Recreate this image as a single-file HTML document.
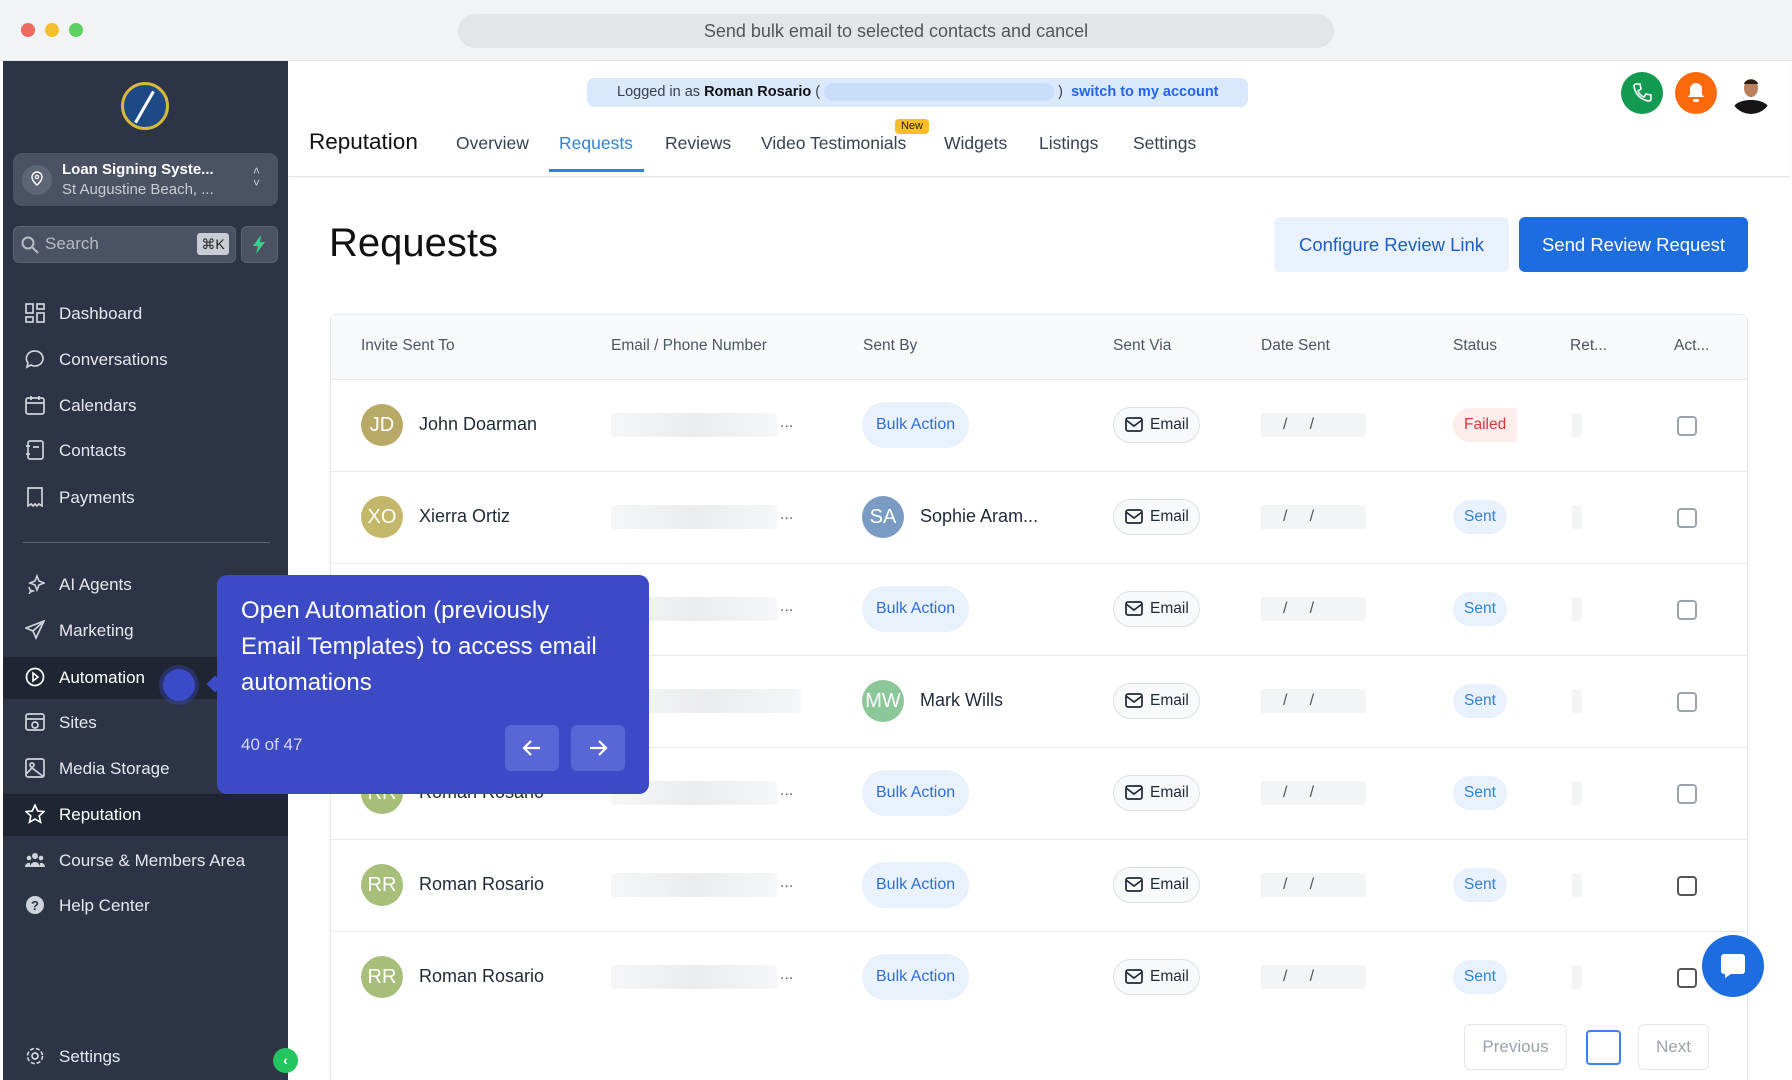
<!DOCTYPE html>
<html><head><meta charset="utf-8"><style>
*{box-sizing:border-box;margin:0;padding:0}
body{width:1792px;height:1080px;overflow:hidden;background:#fff;font-family:"Liberation Sans",sans-serif;position:relative;color:#1f2937}
.a{position:absolute}
.tb{left:0;top:0;width:1792px;height:61px;background:#f2f3f5;border-bottom:1px solid #e3e4e7}
.dot{width:14px;height:14px;border-radius:50%;top:23px}
.url{left:458px;top:14px;width:876px;height:34px;border-radius:17px;background:#e4e5e8;text-align:center;line-height:34px;font-size:18px;color:#555}
.sb{left:3px;top:61px;width:285px;height:1019px;background:#2d3446}
.nav{left:0;width:285px;height:42px;color:#e6e8ee;font-size:17px;line-height:42px;padding-left:56px}
.nav svg{position:absolute;left:22px;top:10px}
.tab{top:133px;font-size:17.5px;color:#374151}
.hd{top:337px;font-size:15.5px;color:#4b5563}
.row{left:330px;width:1418px;height:92px;border-top:1px solid #e8eaee}
.av{width:42px;height:42px;border-radius:50%;color:#fff;font-size:20px;text-align:center;line-height:42px}
.nm{font-size:18px;color:#1f2937}
.blur{width:166px;height:24px;background:linear-gradient(90deg,#f5f6f7,#ebecee 50%,#f5f6f7);border-radius:3px}
.pill{height:46px;border-radius:23px;background:#e9f1fd;color:#2f6fd6;font-size:16px;line-height:46px;padding:0 14px}
.em{height:36px;border-radius:18px;border:1px solid #dcdfe4;background:#f8f9fb;font-size:15.5px;line-height:34px;padding:0 10px 0 36px;color:#1f2937}
.em svg{position:absolute;left:11px;top:9px}
.dt{width:105px;height:24px;background:#f3f4f6;font-size:16px;color:#555;line-height:24px;padding-left:22px}
.st{height:34px;border-radius:17px;font-size:15.5px;line-height:34px;padding:0 11px}
.cb{width:20px;height:20px;border:2px solid #9ca3af;border-radius:4px}
.rt{width:10px;height:24px;background:#f3f4f6}
</style></head><body>
<div class="a tb"></div>
<div class="a dot" style="left:21px;background:#ee6a5f"></div>
<div class="a dot" style="left:45px;background:#f5c02f"></div>
<div class="a dot" style="left:69px;background:#5ed163"></div>
<div class="a url">Send bulk email to selected contacts and cancel</div>

<div class="a sb">
 <div class="a" style="left:118px;top:21px;width:48px;height:48px;border-radius:50%;background:#1d4a85;border:3px solid #d7b93a"></div>
 <div class="a" style="left:140px;top:28px;width:3px;height:36px;background:#fff;transform:rotate(30deg)"></div>
 <div class="a" style="left:10px;top:92px;width:265px;height:53px;border-radius:9px;background:#4a5263"></div>
 <div class="a" style="left:19px;top:104px;width:30px;height:30px;border-radius:50%;background:#5d6576"></div>
 <svg class="a" style="left:26px;top:110px" width="16" height="18"><path d="M8 1a5 5 0 0 1 5 5c0 4-5 8-5 8S3 10 3 6a5 5 0 0 1 5-5z" fill="none" stroke="#fff" stroke-width="1.4"/><circle cx="8" cy="6" r="1.6" fill="none" stroke="#fff" stroke-width="1.3"/></svg>
 <div class="a" style="left:59px;top:100px;font-size:15px;color:#fff;font-weight:bold">Loan Signing Syste...</div>
 <div class="a" style="left:59px;top:120px;font-size:15px;color:#c8ccd4">St Augustine Beach, ...</div>
 <div class="a" style="left:250px;top:104px;color:#c8ccd4;font-size:12px;line-height:12px">˄<br>˅</div>
 <div class="a" style="left:10px;top:165px;width:223px;height:37px;border-radius:6px;background:#4a5263;border:1px solid #5a6272"></div>
 <div class="a" style="left:42px;top:173px;font-size:17px;color:#b7bcc6">Search</div>
 <div class="a" style="left:194px;top:172px;width:32px;height:22px;background:#c8ccd4;border-radius:3px;font-size:14px;color:#222;text-align:center;line-height:22px">⌘K</div>
 <svg class="a" style="left:18px;top:175px" width="19" height="19"><circle cx="7" cy="7" r="5.5" fill="none" stroke="#b7bcc6" stroke-width="2"/><path d="M11 11l6 6" stroke="#b7bcc6" stroke-width="2"/></svg>
 <div class="a" style="left:238px;top:165px;width:37px;height:37px;border-radius:6px;background:#4a5263;border:1px solid #5a6272"></div>
 <svg class="a" style="left:248px;top:174px" width="16" height="19"><path d="M10 0L2 11h5l-2 8 9-12H9z" fill="#3ecf8e"/></svg>

 <div class="a nav" style="top:232px"><svg width="20" height="20"><g fill="none" stroke="#cfd3da" stroke-width="1.7"><rect x="1" y="1" width="7" height="9"/><rect x="12" y="1" width="7" height="5"/><rect x="1" y="14" width="7" height="5"/><rect x="12" y="10" width="7" height="9"/></g></svg>Dashboard</div>
 <div class="a nav" style="top:278px"><svg width="20" height="20"><path d="M10 2a8 7.5 0 1 1-4 14l-4 2 1-4A8 7.5 0 0 1 10 2z" fill="none" stroke="#cfd3da" stroke-width="1.7"/></svg>Conversations</div>
 <div class="a nav" style="top:324px"><svg width="20" height="20"><g fill="none" stroke="#cfd3da" stroke-width="1.7"><rect x="1" y="3" width="18" height="16" rx="2"/><path d="M1 8h18M6 1v4M14 1v4"/></g></svg>Calendars</div>
 <div class="a nav" style="top:369px"><svg width="20" height="20"><g fill="none" stroke="#cfd3da" stroke-width="1.7"><rect x="3" y="1" width="15" height="18" rx="2"/><path d="M1 6h4M1 14h4M8 7h6"/></g></svg>Contacts</div>
 <div class="a nav" style="top:416px"><svg width="20" height="20"><g fill="none" stroke="#cfd3da" stroke-width="1.7"><path d="M3 1h14v18l-3-2-2 2-2-2-2 2-2-2-3 2z"/></g></svg>Payments</div>
 <div class="a" style="left:20px;top:481px;width:247px;height:1px;background:#5d6576"></div>
 <div class="a nav" style="top:503px"><svg width="20" height="20"><path d="M12 2l2 5 5 2-5 2-2 5-2-5-5-2 5-2zM4 13l1 3 3 1-3 1-1 3" fill="none" stroke="#cfd3da" stroke-width="1.6"/></svg>AI Agents</div>
 <div class="a nav" style="top:549px"><svg width="20" height="20"><path d="M19 1L1 8l7 3 3 7zM8 11l11-10" fill="none" stroke="#cfd3da" stroke-width="1.7"/></svg>Marketing</div>
 <div class="a nav" style="top:596px;background:#1f2533;color:#fff"><svg width="20" height="20"><circle cx="10" cy="10" r="8.5" fill="none" stroke="#fff" stroke-width="1.7"/><path d="M8 6l5 4-5 4z" fill="none" stroke="#fff" stroke-width="1.6"/></svg>Automation</div>
 <div class="a nav" style="top:641px"><svg width="20" height="20"><g fill="none" stroke="#cfd3da" stroke-width="1.7"><rect x="1" y="2" width="18" height="16" rx="2"/><path d="M1 7h18"/><circle cx="10" cy="13" r="3"/></g></svg>Sites</div>
 <div class="a nav" style="top:687px"><svg width="20" height="20"><g fill="none" stroke="#cfd3da" stroke-width="1.7"><rect x="1" y="1" width="18" height="18" rx="2"/><circle cx="7" cy="7" r="2"/><path d="M1 16l6-6 12 9"/></g></svg>Media Storage</div>
 <div class="a nav" style="top:733px;background:#1f2533;color:#fff"><svg width="20" height="20"><path d="M10 1l2.7 6 6.3.6-4.8 4.3 1.4 6.4L10 15l-5.6 3.3 1.4-6.4L1 7.6 7.3 7z" fill="none" stroke="#fff" stroke-width="1.6"/></svg>Reputation</div>
 <div class="a nav" style="top:779px"><svg width="20" height="20"><g fill="#cfd3da"><circle cx="10" cy="6" r="3"/><circle cx="4" cy="8" r="2.3"/><circle cx="16" cy="8" r="2.3"/><path d="M5 17a5 5 0 0 1 10 0zM0 17a4 4 0 0 1 5-4v4zM20 17a4 4 0 0 0-5-4v4z"/></g></svg>Course &amp; Members Area</div>
 <div class="a nav" style="top:824px"><svg width="20" height="20"><circle cx="10" cy="10" r="9" fill="#cfd3da"/><text x="10" y="15" font-size="13" text-anchor="middle" fill="#2d3446" font-family="Liberation Sans" font-weight="bold">?</text></svg>Help Center</div>
 <div class="a nav" style="top:975px"><svg width="20" height="20"><g fill="none" stroke="#cfd3da" stroke-width="1.7"><circle cx="10" cy="10" r="3"/><circle cx="10" cy="10" r="7.5" stroke-dasharray="4 2"/></g></svg>Settings</div>
</div>
<div class="a" style="left:273px;top:1048px;width:25px;height:25px;border-radius:50%;background:#22c55e;color:#fff;font-size:14px;text-align:center;line-height:24px;font-weight:bold">‹</div>

<div class="a" style="left:288px;top:61px;width:1502px;height:116px;border-bottom:1px solid #e5e7eb;box-shadow:0 2px 3px rgba(0,0,0,.04)"></div>
<div class="a" style="left:587px;top:78px;width:661px;height:29px;border-radius:7px;background:#d9e8fd;font-size:14.5px;line-height:29px;color:#374151;padding-left:30px">Logged in as <b style="color:#111">Roman Rosario</b> ( <span style="display:inline-block;width:230px;height:18px;vertical-align:middle;background:#c9dcf8;border-radius:9px"></span> )&nbsp; <b style="color:#2563eb">switch to my account</b></div>
<div class="a" style="left:1621px;top:72px;width:42px;height:42px;border-radius:50%;background:#139a51"></div>
<svg class="a" style="left:1631px;top:82px" width="22" height="22"><path d="M5 2l4 0 1 5-3 2a11 11 0 0 0 6 6l2-3 5 1v4a2 2 0 0 1-2 2A17 17 0 0 1 3 4a2 2 0 0 1 2-2z" fill="none" stroke="#fff" stroke-width="1.6"/></svg>
<div class="a" style="left:1675px;top:72px;width:42px;height:42px;border-radius:50%;background:#fb6a0a"></div>
<svg class="a" style="left:1685px;top:81px" width="22" height="24"><path d="M11 2a6 6 0 0 1 6 6v5l2 3H3l2-3V8a6 6 0 0 1 6-6z" fill="#fff"/><rect x="8" y="18" width="6" height="3" rx="1.5" fill="#fff"/></svg>
<svg class="a" style="left:1729px;top:71px" width="44" height="44"><defs><clipPath id="c"><circle cx="22" cy="22" r="21"/></clipPath></defs><g clip-path="url(#c)"><rect width="44" height="44" fill="#fff"/><path d="M2 44c0-10 8-15 20-15s20 5 20 15z" fill="#151515"/><ellipse cx="22" cy="17" rx="7" ry="9" fill="#b9805c"/><path d="M15 13c1-6 13-6 14 0" fill="#2a1d15"/></g></svg>

<div class="a" style="left:309px;top:129px;font-size:22.5px;color:#111">Reputation</div>
<div class="a tab" style="left:456px">Overview</div>
<div class="a tab" style="left:559px;color:#2f84d4">Requests</div>
<div class="a" style="left:549px;top:169px;width:95px;height:3px;background:#2f84d4"></div>
<div class="a tab" style="left:665px">Reviews</div>
<div class="a tab" style="left:761px">Video Testimonials</div>
<div class="a" style="left:895px;top:119px;width:34px;height:15px;border-radius:4px;background:#fbbf24;font-size:11px;text-align:center;line-height:15px;color:#222">New</div>
<div class="a tab" style="left:944px">Widgets</div>
<div class="a tab" style="left:1039px">Listings</div>
<div class="a tab" style="left:1133px">Settings</div>

<div class="a" style="left:329px;top:221px;font-size:40px;color:#111">Requests</div>
<div class="a" style="left:1274px;top:217px;width:235px;height:55px;border-radius:6px;background:#e9f1fd;color:#1d5fc9;font-size:18.5px;text-align:center;line-height:55px">Configure Review Link</div>
<div class="a" style="left:1519px;top:217px;width:229px;height:55px;border-radius:6px;background:#1d6ce0;color:#fff;font-size:18.5px;text-align:center;line-height:55px">Send Review Request</div>

<div class="a" style="left:330px;top:314px;width:1418px;height:766px;border:1px solid #e5e7eb;border-bottom:none;border-radius:6px 6px 0 0;box-shadow:0 1px 4px rgba(0,0,0,.05)"></div>
<div class="a" style="left:331px;top:315px;width:1416px;height:64px;background:#f8f9fb"></div>
<div class="a hd" style="left:361px">Invite Sent To</div>
<div class="a hd" style="left:611px">Email / Phone Number</div>
<div class="a hd" style="left:863px">Sent By</div>
<div class="a hd" style="left:1113px">Sent Via</div>
<div class="a hd" style="left:1261px">Date Sent</div>
<div class="a hd" style="left:1453px">Status</div>
<div class="a hd" style="left:1570px">Ret...</div>
<div class="a hd" style="left:1674px">Act...</div>

<div class="a row" style="top:379px"></div><div class="a row" style="top:471px"></div><div class="a row" style="top:563px"></div><div class="a row" style="top:655px"></div><div class="a row" style="top:747px"></div><div class="a row" style="top:839px"></div><div class="a row" style="top:931px"></div>

<div class="a av" style="left:361px;top:404px;background:#b9a966">JD</div><div class="a nm" style="left:419px;top:414px">John Doarman</div>
<div class="a av" style="left:361px;top:496px;background:#c4b76a">XO</div><div class="a nm" style="left:419px;top:506px">Xierra Ortiz</div>
<div class="a av" style="left:361px;top:772px;background:#a7bf7b">RR</div><div class="a nm" style="left:419px;top:782px">Roman Rosario</div>
<div class="a av" style="left:361px;top:864px;background:#a7bf7b">RR</div><div class="a nm" style="left:419px;top:874px">Roman Rosario</div>
<div class="a av" style="left:361px;top:956px;background:#a7bf7b">RR</div><div class="a nm" style="left:419px;top:966px">Roman Rosario</div>

<div class="a blur" style="left:611px;top:413px"></div><div class="a" style="left:780px;top:414px;color:#666">...</div>
<div class="a blur" style="left:611px;top:505px"></div><div class="a" style="left:780px;top:506px;color:#666">...</div>
<div class="a blur" style="left:611px;top:597px"></div><div class="a" style="left:780px;top:598px;color:#666">...</div>
<div class="a blur" style="left:611px;top:689px;width:190px"></div>
<div class="a blur" style="left:611px;top:781px"></div><div class="a" style="left:780px;top:782px;color:#666">...</div>
<div class="a blur" style="left:611px;top:873px"></div><div class="a" style="left:780px;top:874px;color:#666">...</div>
<div class="a blur" style="left:611px;top:965px"></div><div class="a" style="left:780px;top:966px;color:#666">...</div>

<div class="a pill" style="left:862px;top:402px">Bulk Action</div>
<div class="a av" style="left:862px;top:496px;background:#7a9bc3">SA</div><div class="a nm" style="left:920px;top:506px">Sophie Aram...</div>
<div class="a pill" style="left:862px;top:586px">Bulk Action</div>
<div class="a av" style="left:862px;top:680px;background:#8cc79a">MW</div><div class="a nm" style="left:920px;top:690px">Mark Wills</div>
<div class="a pill" style="left:862px;top:770px">Bulk Action</div>
<div class="a pill" style="left:862px;top:862px">Bulk Action</div>
<div class="a pill" style="left:862px;top:954px">Bulk Action</div>

<div class="a em" style="left:1113px;top:407px"><svg width="18" height="16"><rect x="1" y="1" width="16" height="13" rx="2" fill="none" stroke="#1f2937" stroke-width="1.7"/><path d="M1 3l8 6 8-6" fill="none" stroke="#1f2937" stroke-width="1.7"/></svg>Email</div>
<div class="a em" style="left:1113px;top:499px"><svg width="18" height="16"><rect x="1" y="1" width="16" height="13" rx="2" fill="none" stroke="#1f2937" stroke-width="1.7"/><path d="M1 3l8 6 8-6" fill="none" stroke="#1f2937" stroke-width="1.7"/></svg>Email</div>
<div class="a em" style="left:1113px;top:591px"><svg width="18" height="16"><rect x="1" y="1" width="16" height="13" rx="2" fill="none" stroke="#1f2937" stroke-width="1.7"/><path d="M1 3l8 6 8-6" fill="none" stroke="#1f2937" stroke-width="1.7"/></svg>Email</div>
<div class="a em" style="left:1113px;top:683px"><svg width="18" height="16"><rect x="1" y="1" width="16" height="13" rx="2" fill="none" stroke="#1f2937" stroke-width="1.7"/><path d="M1 3l8 6 8-6" fill="none" stroke="#1f2937" stroke-width="1.7"/></svg>Email</div>
<div class="a em" style="left:1113px;top:775px"><svg width="18" height="16"><rect x="1" y="1" width="16" height="13" rx="2" fill="none" stroke="#1f2937" stroke-width="1.7"/><path d="M1 3l8 6 8-6" fill="none" stroke="#1f2937" stroke-width="1.7"/></svg>Email</div>
<div class="a em" style="left:1113px;top:867px"><svg width="18" height="16"><rect x="1" y="1" width="16" height="13" rx="2" fill="none" stroke="#1f2937" stroke-width="1.7"/><path d="M1 3l8 6 8-6" fill="none" stroke="#1f2937" stroke-width="1.7"/></svg>Email</div>
<div class="a em" style="left:1113px;top:959px"><svg width="18" height="16"><rect x="1" y="1" width="16" height="13" rx="2" fill="none" stroke="#1f2937" stroke-width="1.7"/><path d="M1 3l8 6 8-6" fill="none" stroke="#1f2937" stroke-width="1.7"/></svg>Email</div>

<div class="a dt" style="left:1261px;top:413px">/&nbsp;&nbsp;&nbsp;&nbsp;&nbsp;/</div>
<div class="a dt" style="left:1261px;top:505px">/&nbsp;&nbsp;&nbsp;&nbsp;&nbsp;/</div>
<div class="a dt" style="left:1261px;top:597px">/&nbsp;&nbsp;&nbsp;&nbsp;&nbsp;/</div>
<div class="a dt" style="left:1261px;top:689px">/&nbsp;&nbsp;&nbsp;&nbsp;&nbsp;/</div>
<div class="a dt" style="left:1261px;top:781px">/&nbsp;&nbsp;&nbsp;&nbsp;&nbsp;/</div>
<div class="a dt" style="left:1261px;top:873px">/&nbsp;&nbsp;&nbsp;&nbsp;&nbsp;/</div>
<div class="a dt" style="left:1261px;top:965px">/&nbsp;&nbsp;&nbsp;&nbsp;&nbsp;/</div>

<div class="a st" style="left:1453px;top:408px;background:#fdecec;color:#d9363e;border-radius:17px 0 0 17px">Failed</div>
<div class="a st" style="left:1453px;top:500px;background:#e9f1fd;color:#2f84d4">Sent</div>
<div class="a st" style="left:1453px;top:592px;background:#e9f1fd;color:#2f84d4">Sent</div>
<div class="a st" style="left:1453px;top:684px;background:#e9f1fd;color:#2f84d4">Sent</div>
<div class="a st" style="left:1453px;top:776px;background:#e9f1fd;color:#2f84d4">Sent</div>
<div class="a st" style="left:1453px;top:868px;background:#e9f1fd;color:#2f84d4">Sent</div>
<div class="a st" style="left:1453px;top:960px;background:#e9f1fd;color:#2f84d4">Sent</div>

<div class="a rt" style="left:1572px;top:413px"></div><div class="a rt" style="left:1572px;top:505px"></div><div class="a rt" style="left:1572px;top:597px"></div><div class="a rt" style="left:1572px;top:689px"></div><div class="a rt" style="left:1572px;top:781px"></div><div class="a rt" style="left:1572px;top:873px"></div><div class="a rt" style="left:1572px;top:965px"></div>

<div class="a cb" style="left:1677px;top:416px"></div><div class="a cb" style="left:1677px;top:508px"></div><div class="a cb" style="left:1677px;top:600px"></div><div class="a cb" style="left:1677px;top:692px"></div><div class="a cb" style="left:1677px;top:784px"></div><div class="a cb" style="left:1677px;top:876px;border-color:#555"></div><div class="a cb" style="left:1677px;top:968px;border-color:#555"></div>

<div class="a" style="left:1464px;top:1024px;width:103px;height:46px;border:1px solid #e5e7eb;border-radius:6px;color:#9ca3af;font-size:17px;text-align:center;line-height:44px">Previous</div>
<div class="a" style="left:1586px;top:1030px;width:35px;height:35px;border:2px solid #3b82f6;border-radius:4px"></div>
<div class="a" style="left:1638px;top:1024px;width:71px;height:46px;border:1px solid #e5e7eb;border-radius:6px;color:#9ca3af;font-size:17px;text-align:center;line-height:44px">Next</div>

<div class="a" style="left:1702px;top:935px;width:62px;height:62px;border-radius:50%;background:#1d6ce0"></div>
<svg class="a" style="left:1719px;top:952px" width="28" height="28"><path d="M5 2h18a3 3 0 0 1 3 3v14a3 3 0 0 1-3 3H12l-6 4v-4H5a3 3 0 0 1-3-3V5a3 3 0 0 1 3-3z" fill="#fff"/></svg>

<div class="a" style="left:163px;top:669px;width:32px;height:32px;border-radius:50%;background:#3b4bc8;box-shadow:0 0 0 4px rgba(59,75,200,.35)"></div>
<div class="a" style="left:209px;top:678px;width:12px;height:12px;background:#3b4bc8;transform:rotate(45deg)"></div>
<div class="a" style="left:217px;top:575px;width:432px;height:219px;border-radius:10px;background:#3c4ac6"></div>
<div class="a" style="left:241px;top:593px;width:372px;font-size:24px;line-height:36px;color:#fff">Open Automation (previously Email Templates) to access email automations</div>
<div class="a" style="left:241px;top:735px;font-size:17px;color:#d5d9f5">40 of 47</div>
<div class="a" style="left:505px;top:725px;width:54px;height:46px;border-radius:6px;background:#5966d6"></div>
<div class="a" style="left:571px;top:725px;width:54px;height:46px;border-radius:6px;background:#5966d6"></div>
<svg class="a" style="left:521px;top:737px" width="22" height="22"><path d="M19 11H3M10 4l-7 7 7 7" fill="none" stroke="#fff" stroke-width="2.2"/></svg>
<svg class="a" style="left:587px;top:737px" width="22" height="22"><path d="M3 11h16M12 4l7 7-7 7" fill="none" stroke="#fff" stroke-width="2.2"/></svg>
</body></html>
